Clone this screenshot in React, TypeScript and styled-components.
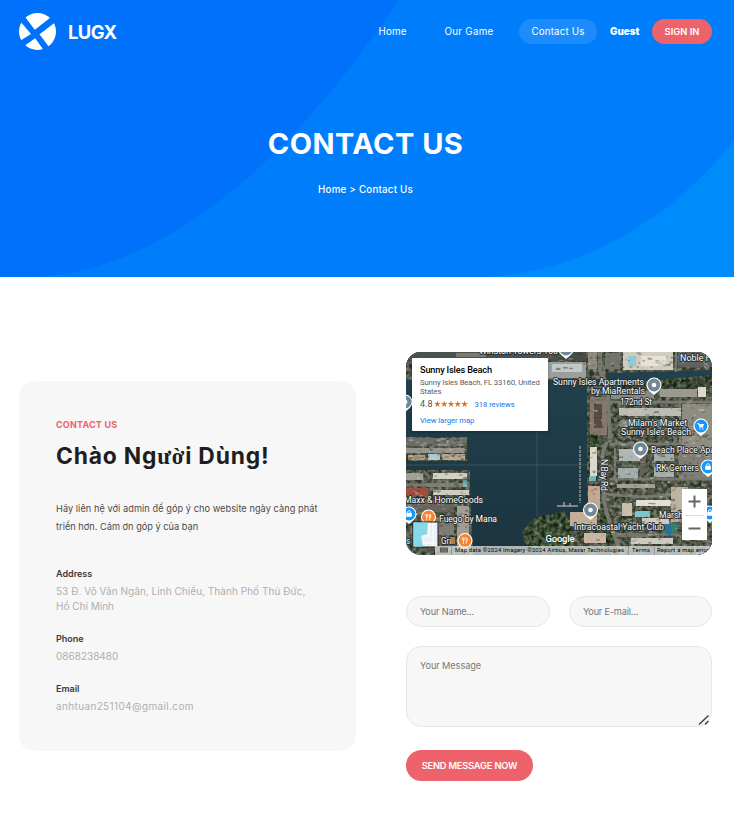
import React from "react";
import styled, { createGlobalStyle } from "styled-components";

const GlobalStyle = createGlobalStyle`
  * { box-sizing: border-box; }
  html { background: #fff; }
  body { margin: 0; font-family: Inter, "Open Sans", sans-serif; overflow: hidden; }
  h1, h2, h3, p, dl, dd, dt { margin: 0; }
  a { color: inherit; text-decoration: none; }
`;

const Page = styled.div`
  width: 734px;
  height: 814px;
  overflow: hidden;
`;

const Hero = styled.section`
  position: relative;
  height: 277px;
  color: #fff;
  background: #0071fb;
`;

const HeroArt = styled.svg`
  position: absolute;
  inset: 0;
`;

const TopBar = styled.header`
  position: relative;
  height: 63px;
  padding: 0 22px 0 19px;
  display: flex;
  align-items: center;
  justify-content: space-between;
`;

const Brand = styled.a`
  display: flex;
  align-items: center;
  gap: 12px;
  font-size: 18.4px;
  font-weight: 700;
  letter-spacing: -0.6px;
`;

const Nav = styled.nav`
  display: flex;
  align-items: center;
`;

const NavLink = styled.a<{ $width: number; $active?: boolean; $track?: number }>`
  width: ${(p) => p.$width}px;
  height: 25px;
  line-height: 25px;
  border-radius: 13px;
  text-align: center;
  white-space: nowrap;
  font-size: 9.8px;
  font-weight: 400;
  letter-spacing: ${(p) => p.$track ?? 0}px;
  background: ${(p) => (p.$active ? "rgba(255,255,255,0.11)" : "transparent")};
`;

const UserName = styled.span`
  width: 30px;
  margin: 0 12px 0 13px;
  white-space: nowrap;
  font-size: 9.8px;
  font-weight: 900;
`;

const SignIn = styled.button`
  width: 60px;
  height: 25px;
  padding: 0;
  border: 0;
  border-radius: 13px;
  background: #ee626b;
  color: #fff;
  font: 600 9.4px/25px Inter, sans-serif;
  white-space: nowrap;
`;

const HeroText = styled.div`
  position: relative;
  padding-top: 61px;
  text-align: center;
`;

const HeroTitle = styled.h1`
  height: 40px;
  padding-right: 3px;
  font-size: 29px;
  line-height: 40px;
  font-weight: 700;
  letter-spacing: 0.45px;
`;

const Crumbs = styled.p`
  margin-top: 16px;
  padding-right: 3px;
  font-size: 9.8px;
  line-height: 20px;
  font-weight: 500;
  letter-spacing: 0.2px;
`;

const Main = styled.main`
  display: grid;
  grid-template-columns: 337px 306px;
  column-gap: 50px;
  align-items: start;
  padding: 75px 22px 0 19px;
`;

const InfoCard = styled.section`
  height: 370px;
  margin-top: 29px;
  padding: 35px 37px;
  border-radius: 15px;
  background: #f7f7f7;
`;

const Eyebrow = styled.p`
  height: 17px;
  line-height: 17px;
  font-size: 9px;
  font-weight: 700;
  color: #ee626b;
  letter-spacing: 0.2px;
`;

const Greeting = styled.h2`
  height: 36px;
  margin-top: 5px;
  white-space: nowrap;
  font-size: 22.8px;
  line-height: 36px;
  font-weight: 700;
  letter-spacing: 0.82px;
  color: #1e1e1e;
`;

const Horned = styled.span`
  font-family: "Liberation Serif", serif;
`;

const Intro = styled.p<{ $track: number }>`
  white-space: nowrap;
  font-size: 9.2px;
  line-height: 18px;
  color: #4a4a4a;
  letter-spacing: ${(p) => p.$track}px;
`;

const IntroBlock = styled.div`
  margin-top: 26px;
`;

const Details = styled.dl`
  margin-top: 28px;
`;

const Detail = styled.div`
  margin-bottom: 16px;
`;

const Term = styled.dt`
  height: 19px;
  font-size: 9px;
  line-height: 19px;
  font-weight: 600;
  color: #3a3a3a;
`;

const Value = styled.dd<{ $track?: number }>`
  height: 15px;
  margin-left: 0;
  white-space: nowrap;
  font-size: 10px;
  line-height: 16px;
  color: #afafaf;
  letter-spacing: ${(p) => p.$track ?? 0}px;
`;

const RightColumn = styled.div`
  display: flex;
  flex-direction: column;
`;

const MapFrame = styled.div`
  position: relative;
  height: 203px;
  border-radius: 15px;
  overflow: hidden;
  background: #1f3c46;
`;

const MapArt = styled.svg`
  display: block;
`;

const PlaceCard = styled.div`
  position: absolute;
  left: 6px;
  top: 6px;
  width: 136px;
  height: 73px;
  padding: 6px 8px;
  border-radius: 1px;
  background: #fff;
  box-shadow: 0 1px 3px rgba(0, 0, 0, 0.3);
  font-family: Roboto, sans-serif;
`;

const PlaceName = styled.p`
  font-size: 9.2px;
  line-height: 12px;
  font-weight: 500;
  color: #000;
  white-space: nowrap;
  letter-spacing: -0.18px;
`;

const PlaceAddress = styled.p`
  margin-top: 2px;
  font-size: 7.7px;
  line-height: 9px;
  color: #5b5b5b;
  white-space: nowrap;
  letter-spacing: -0.09px;
`;

const Rating = styled.div`
  display: flex;
  align-items: center;
  height: 12px;
  margin-top: 2px;
  font-size: 9px;
  color: #555;
`;

const Stars = styled.svg`
  margin: 0 7px 0 1px;
`;

const MapLink = styled.a`
  font-size: 7.7px;
  color: #1a73e8;
  white-space: nowrap;
  letter-spacing: -0.06px;
`;

const LargerMap = styled.p`
  margin-top: 5px;
  line-height: 12px;
  font-size: 7.7px;
`;

const ZoomControl = styled.div`
  position: absolute;
  left: 276px;
  top: 137px;
  width: 25px;
  height: 51px;
  background: #fff;
  display: grid;
  grid-template-rows: 1fr 1fr;
  place-items: center;
`;

const Form = styled.form`
  display: grid;
  grid-template-columns: 144px 143px;
  column-gap: 19px;
  margin-top: 41px;
`;

const Input = styled.input<{ $track?: number }>`
  width: 100%;
  height: 31px;
  padding: 0 13px 1px;
  border: 1px solid #e6e6e6;
  border-radius: 16px;
  background: #f7f7f7;
  font: 400 9.2px Inter, sans-serif;
  outline: none;
  letter-spacing: ${(p) => p.$track ?? 0}px;
  &::placeholder { color: #777; opacity: 1; }
`;

const MessageBox = styled.div`
  position: relative;
  grid-column: 1 / -1;
  height: 81px;
  margin: 19px 0 23px;
`;

const Message = styled.textarea`
  display: block;
  width: 100%;
  height: 81px;
  padding: 11px 13px;
  border: 1px solid #e6e6e6;
  border-radius: 15px;
  background: #f7f7f7;
  font: 400 9.2px/16px Inter, sans-serif;
  letter-spacing: -0.08px;
  resize: none;
  outline: none;
  &::placeholder { color: #777; opacity: 1; }
`;

const Grip = styled.svg`
  position: absolute;
  right: 2px;
  bottom: 1px;
`;

const Submit = styled.button`
  width: 127px;
  height: 31px;
  padding: 0;
  border: 0;
  border-radius: 16px;
  background: #ee626b;
  color: #fff;
  font: 600 9.3px/31px Inter, sans-serif;
  letter-spacing: -0.2px;
  white-space: nowrap;
`;

function Logo() {
  return (
    <svg width="37" height="37" viewBox="0 0 37 37">
      <defs>
        <clipPath id="disc"><circle cx="18.5" cy="18.5" r="18.5" /></clipPath>
      </defs>
      <g clipPath="url(#disc)" fill="#fff">
        <path d="M6.5 4.5L15.8 16.8L31.5 4.5L30 -2L8 -2Z" />
        <path d="M1.8 9L12 21L1.5 27.5L-2 20Z" />
        <path d="M20.5 21.2L37 8.7L40 25L30 34Z" />
        <path d="M6.5 32L16.2 25.2L24.2 36.5L20 40L6 40Z" />
      </g>
    </svg>
  );
}

// x, y, width, height, fill
type Block = [number, number, number, number, string];

const blocks: Block[] = [
  [0, 0, 142, 6, "#4b5350"], [50, 1, 30, 4, "#7b7a72"], [143, 0, 37, 9, "#484c44"],
  [142, 10, 38, 16, "#98a09e"], [146, 12, 30, 8, "#c4c8c7"], [182, 0, 9, 17, "#8f8c82"],
  [199, 1, 15, 16, "#73746e"], [217, 0, 50, 18, "#d0ccc0"], [222, 4, 8, 10, "#8dccd4"],
  [235, 4, 25, 10, "#e6e2d6"], [272, 0, 34, 15, "#62645b"],
  [0, 86, 60, 8, "#6b6e69"], [0, 96, 58, 5, "#96938c"], [2, 103, 17, 5, "#b79a83"],
  [22, 102, 12, 6, "#a8c9d4"], [36, 102, 23, 6, "#b4a892"],
  [0, 121, 17, 7, "#a09f96"], [27, 121, 34, 6, "#d3d1c4"], [20, 131, 40, 4, "#7e7f72"],
  [0, 136, 22, 8, "#9f4d3d"], [27, 138, 36, 5, "#cecdc0"], [57, 128, 4, 7, "#73b7bd"],
  [0, 150, 48, 10, "#64655d"], [51, 154, 12, 45, "#a09d93"], [30, 165, 18, 18, "#7d7b74"],
  [184, 45, 17, 38, "#85776b"], [188, 52, 8, 24, "#544c44"], [205, 39, 43, 8, "#85898c"],
  [254, 37, 37, 8, "#9a9a93"], [292, 35, 8, 10, "#ddd9d1"],
  [213, 56, 62, 8, "#bdbdb5"], [214, 68, 55, 7, "#838378"], [276, 52, 30, 45, "#8f8c80"],
  [184, 95, 7, 29, "#ddd9ce"], [183, 124, 7, 5, "#70b7be"], [182, 134, 12, 23, "#c1a791"],
  [213, 97, 22, 12, "#aeb7b5"], [248, 97, 20, 12, "#a5aca8"], [212, 116, 20, 10, "#a4ada9"],
  [248, 115, 20, 10, "#a4ada9"], [234, 103, 6, 18, "#655f59"],
  [273, 98, 33, 28, "#807f76"], [211, 132, 38, 4, "#a3a092"], [230, 148, 35, 6, "#e3dfd5"],
  [216, 151, 10, 13, "#c9c0ab"], [229, 159, 15, 6, "#7ec5cc"], [236, 166, 27, 6, "#cfcabd"],
  [265, 135, 17, 35, "#bdb3a1"], [259, 172, 6, 11, "#2b7298"], [266, 172, 5, 10, "#377d70"],
  [164, 160, 27, 14, "#c2ae99"], [178, 181, 22, 10, "#c9b7a3"], [225, 186, 42, 6, "#ccc9c0"],
  [208, 181, 32, 4, "#767567"],
];

function Scatter({ x, y, w, h, seed, n }: { x: number; y: number; w: number; h: number; seed: number; n: number }) {
  const tones = ["#aaa89e", "#30362f", "#5c5e56", "#d4d1c6", "#27341f", "#6c675c"];
  let s = seed;
  const next = () => {
    s = (s * 16807) % 2147483647;
    return s / 2147483647;
  };
  return (
    <g opacity="0.45">
      {Array.from({ length: n }, (_, i) => (
        <rect key={i} x={x + next() * w} y={y + next() * h} width={1 + next() * 4} height={0.7 + next() * 1.6} fill={tones[Math.floor(next() * 6)]} />
      ))}
    </g>
  );
}

function Pin({ x, y, color, kind }: { x: number; y: number; color: string; kind: "dot" | "cart" | "bag" | "food" }) {
  return (
    <g transform={`translate(${x} ${y})`}>
      <path d="M0 10L-4.8 6A7.6 7.6 0 1 1 4.8 6Z" fill="#fff" />
      <circle r="6.4" fill={color} />
      {kind === "dot" && <circle r="2.3" fill="#fff" />}
      {kind === "cart" && (
        <g fill="#fff">
          <path d="M-3.7 -3H-2.2L-1.7 -2H3.2L1.8 1H-1.5L-3 -2.2H-3.7Z" />
          <path d="M-1.7 1.5H2.4V2.1H-1.7Z" />
          <circle cx="-1" cy="3" r=".7" /><circle cx="1.8" cy="3" r=".7" />
        </g>
      )}
      {kind === "bag" && (
        <g><rect x="-2.8" y="-1.2" width="5.6" height="4" fill="#fff" /><path d="M-1.4 -1V-2A1.4 1.4 0 0 1 1.4 -2V-1" fill="none" stroke="#fff" strokeWidth=".8" /></g>
      )}
      {kind === "food" && (
        <g stroke="#fff" fill="none" strokeWidth=".8"><path d="M-2.7 -3V-1Q-1.7 .5 -.7 -1V-3M-1.7 -3V3.5M1.2 3.5V-3Q2.8 -2.5 2.3 .5H1.2" /></g>
      )}
    </g>
  );
}

// x, y, text, rendered length
type Label = [number, number, string, number];

const labels: Label[] = [
  [73, 2.4, "Winston Towers 100", 79], [274, 9, "Noble H", 32],
  [147, 33, "Sunny Isles Apartments", 91], [185, 42, "by MiaRentals", 54],
  [214, 53, "172nd St", 32], [222, 73.5, "Milam's Market", 59],
  [215, 82.5, "Sunny Isles Beach", 70], [245, 101, "Beach Place Apa", 64],
  [250, 119, "RK Centers", 43], [-2, 151, "Maxx & HomeGoods", 79],
  [33, 169.5, "Fuego by Mana", 58], [35, 192, "Grill", 14], [0, 192, "s", 4],
  [253, 166, "Marsh", 24], [168, 177.5, "Intracoastal Yacht Club", 90],
];

function Satellite() {
  return (
    <MapArt width="306" height="203" viewBox="0 0 306 203">
      <defs>
        <filter id="grain" x="0" y="0" width="100%" height="100%" colorInterpolationFilters="sRGB">
          <feTurbulence type="fractalNoise" baseFrequency="0.25" numOctaves="3" seed="8" result="n" />
          <feColorMatrix in="n" type="matrix" values="1.5 0 0 0 -.42  1.5 0 0 0 -.4  1.5 0 0 0 -.46  0 0 0 0 .45" result="g" />
          <feComposite in="g" in2="SourceGraphic" operator="in" result="c" />
          <feMerge><feMergeNode in="SourceGraphic" /><feMergeNode in="c" /></feMerge>
        </filter>
        <linearGradient id="sea" x1="0" y1="0" x2="0" y2="1">
          <stop offset="0" stopColor="#21424d" /><stop offset="1" stopColor="#1b3440" />
        </linearGradient>
      </defs>
      <rect width="306" height="203" fill="url(#sea)" />
      <g filter="url(#grain)">
        <path fill="#50564a" d="M0 0H306V18L201 21V27L142 28H0ZM0 85H61V109H0ZM0 118H64V147L67 203H0Z" />
        <path fill="#4a5342" d="M181 34H202L230 30L306 25V203H160V172L181 158Z" />
        <path fill="#253f20" d="M116 177L130 165L158 159L164 168L166 203H132L118 190Z" />
        <path fill="#26381f" d="M206 32L306 23V36L250 38L206 40Z" />
        <path fill="#293f1f" d="M181 82H195V128H181ZM192 154L203 158L211 203H199Z" />
      </g>
      <g fill="none" stroke="#777972">
        <path d="M194 0V19L202 34V48L204 86Q197 92 196 110L198 145Q198 159 216 203" strokeWidth="4" />
        <path d="M202 50H306M204 92H306M204 127H305M198 142L237 145L265 143M0 133H62" strokeWidth="3" />
        <path d="M274 47V96M209 96V126M270 0V20" strokeWidth="2" />
        <path d="M225 184L265 182L306 190" strokeWidth="2" />
      </g>
      {blocks.map(([x, y, w, h, fill], i) => <rect key={i} x={x} y={y} width={w} height={h} fill={fill} />)}
      <Scatter x={0} y={86} w={58} h={21} seed={71} n={100} />
      <Scatter x={0} y={119} w={60} h={78} seed={91} n={150} />
      <Scatter x={204} y={46} w={100} h={150} seed={129} n={500} />
      <Scatter x={183} y={35} w={18} h={160} seed={321} n={75} />
      <Scatter x={142} y={0} w={162} h={17} seed={457} n={100} />
      <g fill="none" stroke="#9ba09b">
        <path d="M174 94V151" strokeWidth="1.3" strokeDasharray="3 1" />
        <path d="M151 154H172M158 150V155M164 151V155" strokeWidth="1.5" />
      </g>
      <path d="M131 0V203M0 113H306" stroke="#a6babb" strokeOpacity=".18" />
      <Pin x={160} y={-3} color="#718896" kind="dot" />
      <Pin x={248} y={33} color="#718896" kind="dot" />
      <Pin x={295} y={74} color="#1597ff" kind="cart" />
      <Pin x={234.5} y={97} color="#718896" kind="dot" />
      <Pin x={302} y={115} color="#1597ff" kind="bag" />
      <Pin x={304} y={161} color="#1597ff" kind="bag" />
      <Pin x={184.5} y={158} color="#718896" kind="dot" />
      <Pin x={3} y={162} color="#1597ff" kind="bag" />
      <Pin x={22.5} y={165} color="#f5842f" kind="food" />
      <Pin x={59} y={188.5} color="#f5842f" kind="food" />
      <Pin x={-1} y={50} color="#718896" kind="dot" />
      <g fontFamily="Roboto, sans-serif" fontSize="8.8" fill="#fff" stroke="#252d2f" strokeWidth="1.8" paintOrder="stroke" strokeLinejoin="round">
        {labels.map(([x, y, t, len]) => <text key={t} x={x} y={y} textLength={len} lengthAdjust="spacingAndGlyphs">{t}</text>)}
        <text x="194.5" y="107" textLength="32" transform="rotate(90 194.5 107)">N Bay Rd</text>
      </g>
      <text x="139.5" y="190" fontFamily="Roboto, sans-serif" fontSize="9.5" fontWeight="500" fill="#fff" textLength="29">Google</text>
      <rect x="7" y="170" width="25" height="25" fill="#eaf0f6" stroke="#222" />
      <path d="M7.5 170.5H22L21 182L15 184L17 194.5H7.5Z" fill="#85d8e7" />
      <path d="M23 171V184H17M27 171V194M17 191H31" stroke="#fff" fill="none" />
      <rect x="29" y="194" width="277" height="9" fill="#dcdedb" fillOpacity=".76" />
      <rect x="34" y="195.5" width="8" height="5" rx=".7" fill="#555" />
      <path d="M35.5 197H41M35.5 199H41" stroke="#ddd" strokeWidth=".6" strokeDasharray="1 .6" />
      <path d="M45.5 194V203M222.5 194V203M248.5 194V203" stroke="#777" strokeWidth=".6" />
      <g fontFamily="Roboto, sans-serif" fontSize="5.8" fill="#000">
        <text x="49" y="200.2" textLength="169">Map data ©2024 Imagery ©2024 Airbus, Maxar Technologies</text>
        <text x="226" y="200.2" textLength="18">Terms</text>
        <text x="251" y="200.2" textLength="52">Report a map error</text>
      </g>
    </MapArt>
  );
}

export default function App() {
  return (
    <Page>
      <GlobalStyle />
      <Hero>
        <HeroArt width="734" height="277" viewBox="0 0 734 277">
          <path d="M398 0C340 90 200 270 35 277H734V0Z" fill="#007dfb" />
          <path d="M734 140C687 201 599 272 484 277H734Z" fill="#008bfb" />
        </HeroArt>
        <TopBar>
          <Brand href="#"><Logo />LUGX</Brand>
          <Nav>
            <NavLink href="#" $width={53} $track={0.15}>Home</NavLink>
            <NavLink href="#" $width={100} $track={0.3}>Our Game</NavLink>
            <NavLink href="#" $width={78} $track={0.15} $active>Contact Us</NavLink>
            <UserName>Guest</UserName>
            <SignIn>SIGN IN</SignIn>
          </Nav>
        </TopBar>
        <HeroText>
          <HeroTitle>CONTACT US</HeroTitle>
          <Crumbs>Home &gt; Contact Us</Crumbs>
        </HeroText>
      </Hero>
      <Main>
        <InfoCard>
          <Eyebrow>CONTACT US</Eyebrow>
          <Greeting>Chào Ng<Horned>ườ</Horned>i Dùng!</Greeting>
          <IntroBlock>
            <Intro $track={0.06}>Hãy liên hệ với admin để góp ý cho website ngày càng phát</Intro>
            <Intro $track={0.02}>triển hơn. Cám ơn góp ý của bạn</Intro>
          </IntroBlock>
          <Details>
            <Detail>
              <Term>Address</Term>
              <Value $track={0.04}>53 Đ. Võ Văn Ngân, Linh Chiểu, Thành Phố Thủ Đức,</Value>
              <Value>Hồ Chí Minh</Value>
            </Detail>
            <Detail>
              <Term>Phone</Term>
              <Value>0868238480</Value>
            </Detail>
            <Detail>
              <Term>Email</Term>
              <Value $track={0.36}>anhtuan251104@gmail.com</Value>
            </Detail>
          </Details>
        </InfoCard>
        <RightColumn>
          <MapFrame>
            <Satellite />
            <PlaceCard>
              <PlaceName>Sunny Isles Beach</PlaceName>
              <PlaceAddress>Sunny Isles Beach, FL 33160, United<br />States</PlaceAddress>
              <Rating>
                4.8
                <Stars width="34" height="8" viewBox="0 0 34 8" fill="#e7711b">
                  {[0, 1, 2, 3, 4].map((i) => (
                    <path key={i} transform={`translate(${i * 6.8} 0.6)`} d="M3.4 0L4.2 2.4H6.7L4.7 3.9L5.5 6.4L3.4 4.9L1.3 6.4L2.1 3.9L.1 2.4H2.6Z" />
                  ))}
                </Stars>
                <MapLink href="#">318 reviews</MapLink>
              </Rating>
              <LargerMap><MapLink href="#">View larger map</MapLink></LargerMap>
            </PlaceCard>
            <ZoomControl>
              <svg width="13" height="13" viewBox="0 0 13 13"><path d="M.5 6.5H12.5M6.5 .5V12.5" stroke="#666" strokeWidth="2" /></svg>
              <svg width="19" height="25" viewBox="0 0 19 25"><path d="M0 .5H19" stroke="#ddd" /><path d="M3.5 13.5H15.5" stroke="#666" strokeWidth="2" /></svg>
            </ZoomControl>
          </MapFrame>
          <Form>
            <Input placeholder="Your Name..." $track={-0.17} />
            <Input placeholder="Your E-mail..." $track={-0.2} />
            <MessageBox>
              <Message placeholder="Your Message" />
              <Grip width="12" height="12" viewBox="0 0 12 12"><path d="M1 10.5L10.5 1.5M7 10.5L10.5 7" stroke="#444" strokeWidth="1.5" /></Grip>
            </MessageBox>
            <Submit type="button">SEND MESSAGE NOW</Submit>
          </Form>
        </RightColumn>
      </Main>
    </Page>
  );
}
